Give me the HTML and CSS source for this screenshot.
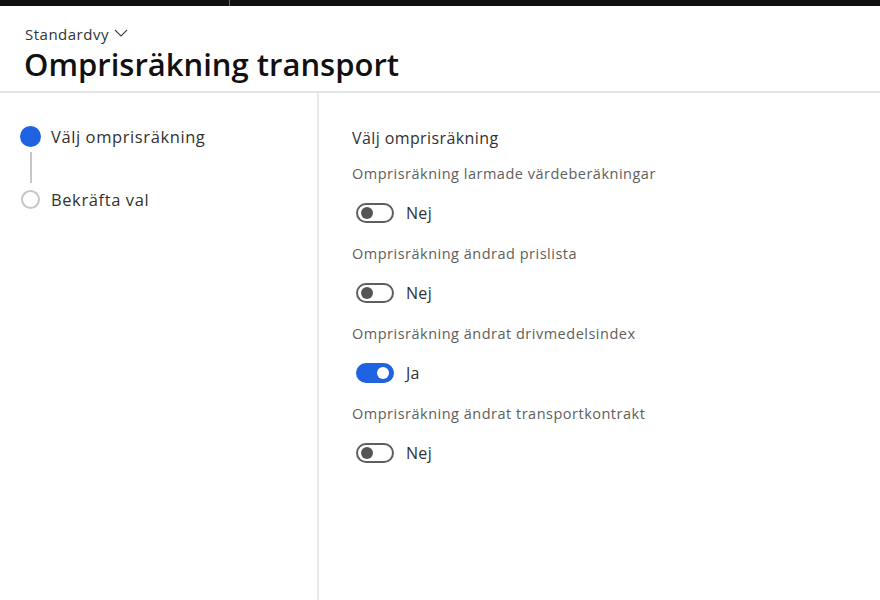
FILE: index.html
```html
<!DOCTYPE html>
<html lang="sv">
<head>
    <meta charset="UTF-8">
    <meta name="viewport" content="width=device-width, initial-scale=1.0">
    <title>Omprisräkning transport</title>
    <link rel="stylesheet" href="styles.css">
</head>
<body>

<div class="topbar">
    <div class="topbar-left"></div>
    <div class="topbar-right"></div>
</div>

<header class="page-header">
    <div class="view-select">
        Standardvy
        <svg class="chevron" width="14" height="8" viewBox="0 0 14 8">
            <path d="M1 1 L7 7 L13 1" fill="none" stroke="#444" stroke-width="1.1"/>
        </svg>
    </div>
    <h1>Omprisräkning transport</h1>
</header>

<main class="wizard">
    <nav class="steps">
        <div class="step active">
            <span class="dot"></span>
            <span class="step-label">Välj omprisräkning</span>
        </div>
        <div class="connector"></div>
        <div class="step">
            <span class="dot"></span>
            <span class="step-label">Bekräfta val</span>
        </div>
    </nav>

    <section class="content">
        <h2>Välj omprisräkning</h2>

        <div class="field">
            <div class="field-label">Omprisräkning larmade värdeberäkningar</div>
            <div class="toggle-row">
                <span class="toggle"></span>
                <span class="toggle-text">Nej</span>
            </div>
        </div>

        <div class="field">
            <div class="field-label">Omprisräkning ändrad prislista</div>
            <div class="toggle-row">
                <span class="toggle"></span>
                <span class="toggle-text">Nej</span>
            </div>
        </div>

        <div class="field">
            <div class="field-label">Omprisräkning ändrat drivmedelsindex</div>
            <div class="toggle-row">
                <span class="toggle on"></span>
                <span class="toggle-text">Ja</span>
            </div>
        </div>

        <div class="field">
            <div class="field-label">Omprisräkning ändrat transportkontrakt</div>
            <div class="toggle-row">
                <span class="toggle"></span>
                <span class="toggle-text">Nej</span>
            </div>
        </div>
    </section>
</main>

</body>
</html>
```

FILE: styles.css
```css
html, body {
    height: 100%;
}

body {
    margin: 0;
    font-family: "Open Sans", Arial, sans-serif;
    color: #323130;
    background-color: #fff;
    display: flex;
    flex-direction: column;
}

.topbar {
    height: 6px;
    display: flex;
    background-color: #111;
}

.topbar-left {
    width: 229px;
    border-right: 1px solid #666;
}

.page-header {
    padding: 18px 24px 0 24px;
    height: 67px;
    border-bottom: 2px solid #e5e5e5;
}

.view-select {
    font-size: 15px;
    color: #333;
    display: flex;
    align-items: center;
    gap: 5px;
    height: 20px;
    letter-spacing: 0.5px;
    padding-left: 1px;
}

.chevron {
    margin-top: -2px;
}

h1 {
    margin: 1px 0 0 0;
    font-size: 31px;
    font-weight: 600;
    color: #111;
    line-height: 38px;
}

.wizard {
    flex: 1;
    display: flex;
}

.steps {
    width: 319px;
    border-right: 2px solid #e8e8e8;
    padding: 32px 0 0 21px;
    box-sizing: border-box;
}

.step {
    display: flex;
    align-items: center;
    gap: 11px;
    height: 22px;
}

.dot {
    width: 15px;
    height: 15px;
    border: 2px solid #c8c6c4;
    border-radius: 50%;
    box-sizing: content-box;
}

.step.active .dot {
    width: 17px;
    height: 17px;
    margin-left: -1px;
    margin-right: -1px;
    background-color: #1f63e2;
    border-color: #1f63e2;
}

.step-label {
    font-size: 16.5px;
    color: #323130;
    letter-spacing: 0.6px;
}

.connector {
    width: 2px;
    height: 31px;
    margin: 5px 0 5px 9px;
    background-color: #c8c6c4;
}

.content {
    padding: 33px 0 0 33px;
}

h2 {
    margin: 0 0 14px 0;
    font-size: 16px;
    font-weight: 400;
    color: #323130;
    line-height: 24px;
    letter-spacing: 0.4px;
}

.field {
    height: 80px;
}

.field-label {
    font-size: 14.5px;
    color: #605e5c;
    line-height: 20px;
    letter-spacing: 0.5px;
}

.toggle-row {
    display: flex;
    align-items: center;
    gap: 12px;
    margin-top: 18px;
    padding-left: 4px;
}

.toggle {
    width: 34px;
    height: 16px;
    border: 2px solid #605e5c;
    border-radius: 10px;
    position: relative;
}

.toggle::after {
    content: "";
    position: absolute;
    top: 2px;
    left: 3px;
    width: 12px;
    height: 12px;
    border-radius: 50%;
    background-color: #555;
}

.toggle.on {
    background-color: #1f63e2;
    border-color: #1f63e2;
}

.toggle.on::after {
    left: auto;
    right: 3px;
    background-color: #fff;
}

.toggle-text {
    font-size: 16px;
    color: #323130;
    letter-spacing: 0.3px;
}
```
